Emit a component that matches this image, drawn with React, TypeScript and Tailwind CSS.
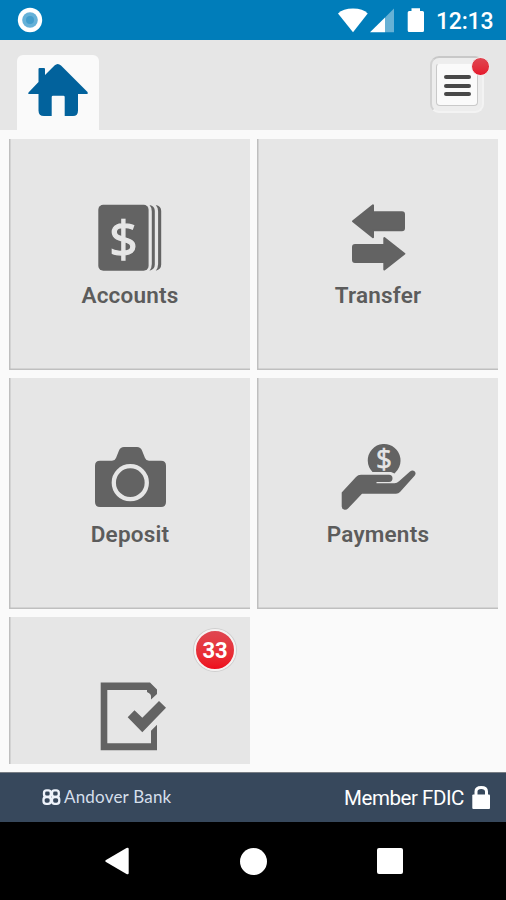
import type { ReactNode } from "react";

const INK = "#636363";
const TILE = "#e6e6e6";

function StatusBar() {
  return (
    <div className="flex h-10 shrink-0 items-start justify-between bg-[#007dba] pl-[17px] pr-3">
      <svg width="26" height="40" viewBox="17 0 26 40">
        <circle cx="30" cy="20" r="12.2" fill="#fff" />
        <circle cx="30" cy="20" r="7.8" fill="#65b1d8" />
        <circle cx="30" cy="20" r="4" fill="#429dcc" />
      </svg>
      <div className="flex h-10">
        <svg width="98" height="40" viewBox="338 0 98 40" fill="#fff">
          <path d="M338 13.500Q343 8.500 353 8.500T367.700 13.500L353 32.200Z" />
          <path d="M394 8.500V32.200H385V17.500Z" opacity=".4" />
          <path d="M385 17.500V32.200H370Z" />
          <path d="M411.500 8.300H420V11H422.500Q424 11 424 12.500V30.500Q424 32 422.500 32H409.200Q407.700 32 407.700 30.500V12.500Q407.700 11 409.200 11H411.500Z" />
        </svg>
        <span className="w-[58px] whitespace-nowrap text-[23px] font-medium leading-[43px] tracking-[-0.2px] text-white">12:13</span>
      </div>
    </div>
  );
}

function Header() {
  return (
    <header className="flex h-[90px] shrink-0 items-start justify-between bg-[#e6e6e6] pl-[17px] pr-[22px] pt-[15px]">
      <div className="h-[75px] w-[82px] rounded-t-md bg-[#fafafa]">
        <svg width="82" height="75" viewBox="17 55 82 75" fill="#02629c">
          <path d="M28.500 92.500L38.500 82V69Q38.500 68 39.500 68H44Q45 68 45 69V75L54.500 65.500Q57.700 62.500 61 65.500L87.500 92Q88.500 94 87 94H78V110.500Q78 116 73 116H64.700V97Q64.700 95.700 63.500 95.700H53Q51.700 95.700 51.700 97V116H44Q38.500 116 38.500 110.500V94H29Q27.500 94 28.500 92.500Z" />
        </svg>
      </div>
      <button className="relative mt-px flex h-[57px] w-[54px] items-center justify-center rounded-[9px] border-2 border-b-[#f3f3f3] border-l-[#d2d2d2] border-r-[#f3f3f3] border-t-[#c8c8c8] bg-[#ededed]">
        <span className="flex h-[43px] w-[42px] flex-col items-center justify-center gap-[4.500px] rounded border border-[#c9c9c9] border-t-[#eee] bg-[#fafafa] pt-0.5">
          <i className="h-1 w-[27px] rounded-full bg-[#484848]" />
          <i className="h-1 w-[27px] rounded-full bg-[#484848]" />
          <i className="h-1 w-[27px] rounded-full bg-[#484848]" />
        </span>
        <span className="absolute -right-[8px] -top-[1px] h-[19px] w-[19px] rounded-full border-[1.5px] border-[#f3e7e7] bg-linear-to-b from-[#df4551] to-[#e5152b]" />
      </button>
    </header>
  );
}

function Tile({ label, children }: { label?: string; children: ReactNode }) {
  return (
    <div className="flex flex-col items-center bg-[#e6e6e6] pt-[63px] shadow-[inset_1.5px_-1.5px_0_#bfbfbf]">
      {children}
      {label && <span className="pl-px text-[22.500px] font-semibold leading-[43px] tracking-[0.200px] text-[#5c5c5c]">{label}</span>}
    </div>
  );
}

function AccountsIcon() {
  return (
    <svg className="shrink-0" width="80" height="72" viewBox="90 202 80 72" fill={INK}>
      <rect x="98.300" y="204.700" width="50.300" height="66" rx="5" />
      <path d="M149.500 205Q154.800 206 154.800 211V264.500Q154.800 269.500 149.500 270.700Q151.800 268 151.800 264V211.500Q151.800 207.500 149.500 205Z" />
      <path d="M155.800 205Q161.200 206 161.200 211V264.500Q161.200 269.500 155.800 270.700Q158.100 268 158.100 264V211.500Q158.100 207.500 155.800 205Z" />
      <text x="123.500" y="256.500" textAnchor="middle" fontSize="50" fontWeight="500" fontFamily="'Open Sans', sans-serif" fill={TILE} stroke={TILE} strokeWidth="1.3">$</text>
    </svg>
  );
}

function TransferIcon() {
  return (
    <svg className="shrink-0" width="80" height="72" viewBox="338 202 80 72" fill={INK} stroke={INK} strokeWidth="2" strokeLinejoin="round">
      <path d="M353 221.300L373 205.300V212.300H402Q404 212.300 404 214.300V228.300Q404 230.300 402 230.300H373V237.300Z" />
      <path d="M404.300 253.700L384.300 238V245H355Q353 245 353 247V260Q353 262 355 262H384.300V269.500Z" />
    </svg>
  );
}

function DepositIcon() {
  return (
    <svg className="shrink-0" width="80" height="72" viewBox="90 441 80 72" fill={INK}>
      <path d="M100 460.700H112Q115 460.700 116 458L119 450.500Q120.300 447 124 447H137Q140.700 447 142 450.500L145 458Q146 460.700 149 460.700H161Q166 460.700 166 465.700V502Q166 507 161 507H100Q95 507 95 502V465.700Q95 460.700 100 460.700Z" />
      <circle cx="130.300" cy="482.700" r="16.500" fill="none" stroke={TILE} strokeWidth="4.300" />
    </svg>
  );
}

function PaymentsIcon() {
  return (
    <svg className="shrink-0 overflow-visible" width="80" height="72" viewBox="338 441 80 72" fill={INK}>
      <path d="M372.500 472A16.400 16.400 0 1 1 397.500 470L394.500 473.500L391 472Z" />
      <text x="384" y="469" textAnchor="middle" fontSize="28" fontWeight="500" fontFamily="'Open Sans', sans-serif" fill={TILE} stroke={TILE} strokeWidth=".6">$</text>
      <path d="M341.700 492.500L356 477Q358 474.700 361 474.700H389Q392.500 474.700 392.500 478.300Q392.500 482 389 482H376.500V483.200H394.500Q397 483.200 399 481.300L410 471.500Q412.500 469.500 414.500 471.300Q416.500 473.200 414.800 475.500L400 492Q398.500 493.700 396 493.700H362L348 508.500Q346.500 510 344.500 509.700Q341.700 509 341.700 506.500Z" />
    </svg>
  );
}

function TaskIcon() {
  return (
    <svg className="shrink-0" width="80" height="72" viewBox="90 680 80 72" fill={INK}>
      <path d="M100.700 682.500H150L157 689.500V694L151 699.500V696Q151 694.500 149.500 693.500L147 692V690H107.300V743.300H151V730.700L157 724.700V750.300H100.700Z" />
      <path d="M127.700 717.300L134.500 710.300L142.300 717.700L159 701L166 707.700L142.300 732.300Z" />
    </svg>
  );
}

function Footer() {
  return (
    <footer className="flex h-[50px] shrink-0 items-center justify-between border-t border-[#777d84] bg-[#37485c] pl-[42px] pr-[15px] text-white">
      <div className="flex items-center gap-[3px] pb-0.5">
        <svg width="19" height="18" viewBox="42 788 19 18" fill="none" stroke="#eef3fb" strokeWidth="2.300">
          <rect x="44" y="790.300" width="6.800" height="6.600" rx="2.600" />
          <rect x="52" y="790.300" width="6.800" height="6.600" rx="2.600" />
          <rect x="43.500" y="797" width="7.300" height="6.900" rx="2.800" />
          <rect x="52" y="797" width="7.300" height="6.900" rx="2.800" />
        </svg>
        <span className="whitespace-nowrap font-['Lato'] text-[17px] leading-6 tracking-[0.2px] text-[#d5dfeb]">Andover Bank</span>
      </div>
      <div className="flex items-center gap-2">
        <span className="whitespace-nowrap text-[20.500px] leading-6 tracking-[-0.450px]">Member FDIC</span>
        <svg width="19" height="24" viewBox="472 786 19 24">
          <path d="M476 796V791.500Q476 787.500 481.200 787.500T486.500 791.500V796" fill="none" stroke="#fff" strokeWidth="3" />
          <rect x="472.300" y="794.500" width="17.700" height="14.500" rx="1" fill="#fff" />
        </svg>
      </div>
    </footer>
  );
}

function NavBar() {
  return (
    <nav className="flex h-[78px] shrink-0 items-center justify-between bg-black pl-[105px] pr-[103px]">
      <svg width="24" height="28" viewBox="105 847 24 28" fill="#fff">
        <path d="M106 860L126.500 848Q128.700 847 128.700 849V873Q128.700 875 126.500 874L106 862Q104.500 861 106 860Z" />
      </svg>
      <span className="h-[27px] w-[27px] rounded-full bg-white" />
      <span className="h-[26px] w-[26px] rounded-xs bg-white" />
    </nav>
  );
}

export default function App() {
  return (
    <div className="flex h-[900px] w-[506px] flex-col overflow-hidden bg-[#fafafa] font-['Roboto',sans-serif]">
      <StatusBar />
      <Header />
      <main className="grid h-[642px] shrink-0 grid-cols-[241px_241px] grid-rows-[231px_231px_147px] gap-x-[7px] gap-y-2 pl-[9px] pt-[9px]">
        <Tile label="Accounts"><AccountsIcon /></Tile>
        <Tile label="Transfer"><TransferIcon /></Tile>
        <Tile label="Deposit"><DepositIcon /></Tile>
        <Tile label="Payments"><PaymentsIcon /></Tile>
        <div className="relative flex flex-col items-center bg-[#e6e6e6] pt-[63px] shadow-[inset_1.5px_0_0_#bfbfbf]">
          <TaskIcon />
          <span className="absolute right-[14px] top-[12px] flex h-[42px] w-[42px] items-center justify-center rounded-full border-2 border-[#f5f2f2] bg-linear-to-b from-[#df4651] to-[#ee0a1c] text-[22px] font-bold text-white shadow-[0_0_0_1px_#cfcfcf]">33</span>
        </div>
      </main>
      <Footer />
      <NavBar />
    </div>
  );
}
